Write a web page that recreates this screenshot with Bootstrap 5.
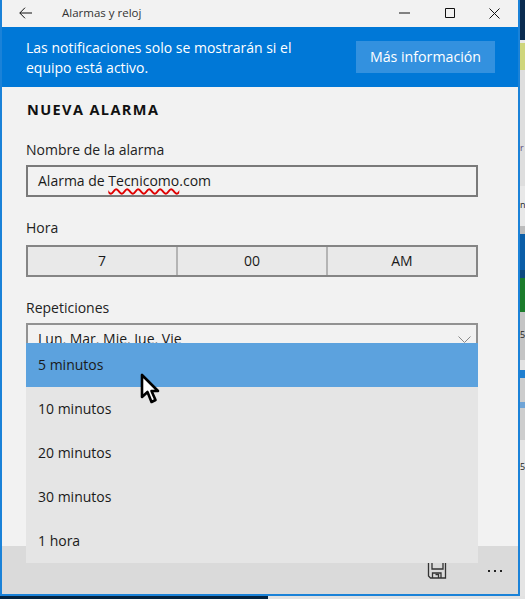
<!DOCTYPE html>
<html lang="es">
<head>
  <meta charset="UTF-8" />
  <meta name="viewport" content="width=device-width, initial-scale=1.0"/>
  <title>Alarmas y reloj</title>
  <link href="https://cdn.jsdelivr.net/npm/bootstrap@5.3.0/dist/css/bootstrap.min.css" rel="stylesheet" />
  <style>
    html, body { height: 599px; overflow: hidden; }
    body {
      font-family: "Open Sans", "Noto Sans", sans-serif;
      color: #1a1a1a;
      font-size: 14px;
      background: linear-gradient(90deg, #04233f 0, #04233f 268px, #e2e2e2 268px);
    }
    .desk { width: 525px; height: 596px; }
    .app-win {
      width: 520px;
      height: 596px;
      background: #f2f2f2;
      border: solid #1a82d8;
      border-width: 0 2px 2px 2px;
    }
    .desk-strip {
      width: 5px;
      font-size: 9px;
      line-height: 14px;
      background: linear-gradient(180deg,
        #0a2c50 0, #0a2c50 40px, #e8e8e8 40px, #e8e8e8 43px,
        #cfd67c 43px, #cfd67c 70px, #dedede 70px, #dedede 186px,
        #e8e8e8 186px, #e8e8e8 226px, #bcbcbc 226px, #bcbcbc 234px,
        #0b5ea8 234px, #0b5ea8 270px, #0d4a80 270px, #0d4a80 278px,
        #1b7d2c 278px, #1b7d2c 312px, #c4c4c4 312px, #c4c4c4 360px,
        #e2e2e2 360px, #e2e2e2 370px, #1f7fd0 370px, #1f7fd0 378px,
        #cccccc 378px, #cccccc 402px, #6fa4d6 402px, #6fa4d6 408px,
        #cdcdcd 408px, #cdcdcd 440px, #e4e4e4 440px);
    }
    .strip-frag { left: 0; white-space: nowrap; }
    .frag-r { top: 141px; color: #5a4a7a; }
    .frag-in { top: 198px; }
    .frag-a { top: 328px; }
    .frag-b { top: 460px; }
    .title-bar { height: 27px; font-size: 11.5px; color: #333; background: #f2f2f2; padding-bottom: 1px; }
    .back-btn { width: 48px; padding-left: 17px; }
    .title-text { margin-left: 12px; }
    .win-btns { width: 135px; margin-right: 1px; }
    .win-btn { width: 45px; }
    .notice-bar { height: 60px; background: #0078d7; padding: 0 23px 0 24px; font-size: 14px; line-height: 20px; }
    .notice-text { padding-top: 2px; }
    .info-btn {
      background: #3391df; color: #fff; width: 139px; height: 32px;
      font-size: 14.2px; border: 0; border-radius: 0; padding: 0;
    }
    .form-area { padding: 13px 40px 0 24px; }
    .form-heading { font-size: 14.5px; font-weight: 700; letter-spacing: 1.4px; color: #111; line-height: 19px; margin: 0 0 21px 1px; }
    .field-label { line-height: 20px; margin-bottom: 5px; font-size: 14px; color: #222; }
    .field-box { height: 32px; border: 2px solid #7a7a7a; background: #f2f2f2; padding: 0 10px; line-height: 28px; font-size: 14px; }
    .spell-err { text-decoration: underline wavy #e00000 1.5px; text-underline-offset: 2px; }
    .time-box { height: 32px; margin-top: 7px; border: 2px solid #858585; background: #e9e9e9; }
    .time-part { flex: 1; text-align: center; line-height: 28px; font-size: 14px; }
    .time-part + .time-part { border-left: 2px solid #b4b4b4; }
    .select-box { border-color: #929292; }
    .gap-a { margin-bottom: 21px; }
    .gap-b { margin-bottom: 21px; }
    .chev { top: 11px; right: 5px; }
    .picker-list {
      top: 343px; left: 24px; width: 452px; z-index: 5;
      --bs-list-group-bg: #e5e5e5;
      --bs-list-group-border-width: 0;
      --bs-list-group-border-radius: 0;
      --bs-list-group-color: #1a1a1a;
    }
    .picker-list .list-group-item { height: 44px; line-height: 44px; padding: 0 12px; font-size: 14px; }
    .picker-list .list-group-item.active { background: #5ca2de; color: #1a1a1a; }
    .mouse-arrow { top: 373px; left: 138px; z-index: 6; }
    .cmd-bar { height: 48px; background: #dadada; }
    .cmd-save { top: 0; left: 424px; }
    .cmd-more { top: 24px; left: 486px; width: 16px; gap: 4px; }
    .cmd-dot { width: 2px; height: 2px; background: #222; }
  </style>
</head>
<body>
  <div class="desk d-flex">
    <div class="app-win position-relative d-flex flex-column">
      <!-- title bar -->
      <div class="title-bar d-flex align-items-center">
        <div class="back-btn d-flex">
          <svg width="13" height="12" viewBox="0 0 13 12" fill="none" stroke="#111" stroke-width="1"><path d="M.8 6H13M6 .7.8 6 6 11.3"/></svg>
        </div>
        <div class="title-text flex-grow-1">Alarmas y reloj</div>
        <div class="win-btns d-flex">
          <div class="win-btn d-flex justify-content-center align-items-center">
            <svg width="11" height="2" viewBox="0 0 11 2"><path d="M0 1h11" stroke="#111"/></svg>
          </div>
          <div class="win-btn d-flex justify-content-center align-items-center">
            <svg width="10" height="10" viewBox="0 0 10 10" fill="none"><path d="M.5.5h9v9h-9z" stroke="#111"/></svg>
          </div>
          <div class="win-btn d-flex justify-content-center align-items-center">
            <svg width="11" height="11" viewBox="0 0 11 11" fill="none"><path d="M.5.5l10 10M10.5.5l-10 10" stroke="#111"/></svg>
          </div>
        </div>
      </div>

      <!-- notice -->
      <div class="notice-bar d-flex align-items-center justify-content-between text-white">
        <div class="notice-text">Las notificaciones solo se mostrarán si el<br>equipo está activo.</div>
        <button class="btn info-btn">Más información</button>
      </div>

      <!-- form -->
      <div class="form-area flex-grow-1">
        <h2 class="form-heading">NUEVA ALARMA</h2>
        <div class="field-label">Nombre de la alarma</div>
        <div class="field-box gap-a">Alarma de <span class="spell-err">Tecnicomo</span>.com</div>
        <div class="field-label mb-0">Hora</div>
        <div class="time-box d-flex gap-b">
          <div class="time-part">7</div>
          <div class="time-part">00</div>
          <div class="time-part">AM</div>
        </div>
        <div class="field-label">Repeticiones</div>
        <div class="field-box select-box position-relative">
          Lun, Mar, Mie, Jue, Vie
          <svg class="chev position-absolute" width="13" height="7" viewBox="0 0 13 7" fill="none"><path d="M.5.5l6 6 6-6" stroke="#888"/></svg>
        </div>
      </div>

      <!-- command bar -->
      <div class="cmd-bar position-relative">
        <svg class="cmd-save position-absolute" width="22" height="34" viewBox="0 0 22 34" fill="none" stroke="#333" stroke-width="1.3">
          <path d="M2.500 14H19.500V32H4.500L2.500 30Z"/>
          <path d="M6 14V23H17V14M6.500 32V27H15V32"/>
          <path d="M9.500 28.500H12.500V32"/>
        </svg>
        <div class="cmd-more position-absolute d-flex">
          <div class="cmd-dot"></div><div class="cmd-dot"></div><div class="cmd-dot"></div>
        </div>
      </div>

      <!-- open dropdown -->
      <ul class="picker-list list-group position-absolute m-0">
        <li class="list-group-item active">5 minutos</li>
        <li class="list-group-item">10 minutos</li>
        <li class="list-group-item">20 minutos</li>
        <li class="list-group-item">30 minutos</li>
        <li class="list-group-item">1 hora</li>
      </ul>

      <svg class="mouse-arrow position-absolute" width="20" height="32" viewBox="0 0 20 32">
        <path d="M2 2V24L7.500 19 11.500 29 15.500 27 11.500 18H18Z" fill="#fff" stroke="#000" stroke-width="2.600" stroke-linejoin="round"/>
      </svg>
    </div>
    <div class="desk-strip position-relative overflow-hidden">
      <span class="strip-frag frag-r position-absolute">r</span>
      <span class="strip-frag frag-in position-absolute">n</span>
      <span class="strip-frag frag-a position-absolute">5</span>
      <span class="strip-frag frag-b position-absolute">5</span>
    </div>
  </div>
</body>
</html>
